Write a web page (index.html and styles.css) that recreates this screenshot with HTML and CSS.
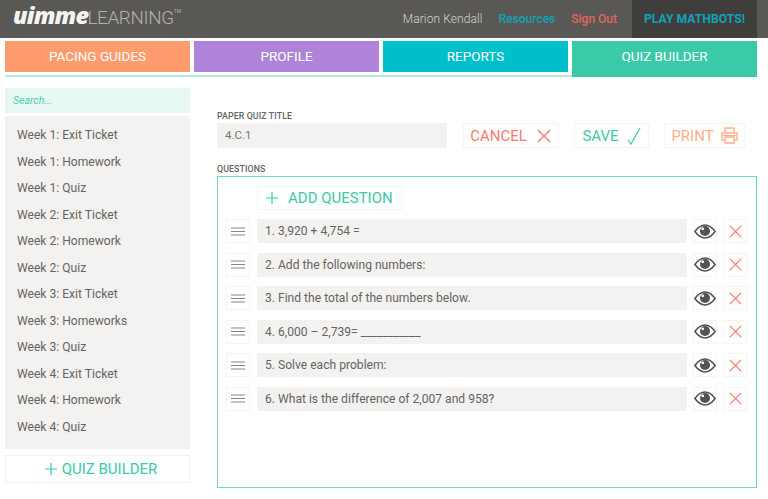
FILE: index.html
```html
<!DOCTYPE html>
<html lang="en">
<head>
<meta charset="utf-8">
<title>Quiz Builder</title>
<link rel="stylesheet" href="styles.css">
</head>
<body>
<svg class="defs" width="0" height="0" aria-hidden="true">
  <symbol id="i-x" viewBox="0 0 16 16"><path d="M2 2 14 14M14 2 2 14" fill="none" stroke="currentColor" stroke-width="1.4"/></symbol>
  <symbol id="i-plus" viewBox="0 0 16 16"><path d="M8 1V15M1 8H15" fill="none" stroke="currentColor" stroke-width="1.4"/></symbol>
  <symbol id="i-eye" viewBox="0 0 24 16"><path d="M1 8C5 2.500 9 1 12 1s7 1.500 11 7c-4 5.500-8 7-11 7S5 13.500 1 8Z" fill="none" stroke="currentColor" stroke-width="1.700"/><circle cx="12" cy="7.500" r="5.500" fill="currentColor"/><circle cx="9.500" cy="5" r="1.500" fill="#fff"/></symbol>
  <symbol id="i-menu" viewBox="0 0 14 9"><path d="M0 1H14M0 4.500H14M0 8H14" fill="none" stroke="currentColor" stroke-width="1"/></symbol>
</svg>
<header class="topbar">
  <div class="logo"><span class="logo-main">uimme</span><span class="logo-sub">LEARNING</span><span class="logo-tm">TM</span></div>
  <nav class="usernav">
    <span class="user">Marion Kendall</span>
    <a class="res">Resources</a>
    <a class="out">Sign Out</a>
    <a class="play">PLAY MATHBOTS!</a>
  </nav>
</header>
<nav class="tabs">
  <a class="tab orange">PACING GUIDES</a>
  <a class="tab purple">PROFILE</a>
  <a class="tab cyan">REPORTS</a>
  <a class="tab green">QUIZ BUILDER</a>
</nav>
<div class="layout">
  <aside class="side">
    <div class="search">Search...</div>
    <ul class="list">
      <li>Week 1: Exit Ticket</li>
      <li>Week 1: Homework</li>
      <li>Week 1: Quiz</li>
      <li>Week 2: Exit Ticket</li>
      <li>Week 2: Homework</li>
      <li>Week 2: Quiz</li>
      <li>Week 3: Exit Ticket</li>
      <li>Week 3: Homeworks</li>
      <li>Week 3: Quiz</li>
      <li>Week 4: Exit Ticket</li>
      <li>Week 4: Homework</li>
      <li>Week 4: Quiz</li>
    </ul>
    <button class="newquiz"><svg class="ic-plus-s"><use href="#i-plus"/></svg>QUIZ BUILDER</button>
  </aside>
  <main class="main">
    <div class="label">PAPER QUIZ TITLE</div>
    <div class="titlerow">
      <div class="titleinput">4.C.1</div>
      <button class="act cancel">CANCEL<svg class="ic-act"><use href="#i-x"/></svg></button>
      <button class="act save">SAVE<svg class="ic-check" viewBox="0 0 14 18"><path d="M1 13 4 17 13 1" fill="none" stroke="currentColor" stroke-width="1.200"/></svg></button>
      <button class="act print">PRINT<svg class="ic-print" viewBox="0 0 17 17"><path d="M4 6V1H13V6M4 13H1V6H16V13H13M4 10H13V16H4Z" fill="none" stroke="currentColor" stroke-width="1.300"/><path d="M2 8.500H15" stroke="currentColor"/></svg></button>
    </div>
    <div class="label qlabel">QUESTIONS</div>
    <section class="qbox">
      <button class="addq"><svg class="ic-plus"><use href="#i-plus"/></svg>ADD QUESTION</button>
      <div class="row"><span class="sq"><svg class="ic-menu"><use href="#i-menu"/></svg></span><div class="q">1. 3,920 + 4,754 =</div><span class="sq eye"><svg class="ic-eye"><use href="#i-eye"/></svg></span><span class="sq del"><svg class="ic-del"><use href="#i-x"/></svg></span></div>
      <div class="row"><span class="sq"><svg class="ic-menu"><use href="#i-menu"/></svg></span><div class="q">2. Add the following numbers:</div><span class="sq eye"><svg class="ic-eye"><use href="#i-eye"/></svg></span><span class="sq del"><svg class="ic-del"><use href="#i-x"/></svg></span></div>
      <div class="row"><span class="sq"><svg class="ic-menu"><use href="#i-menu"/></svg></span><div class="q">3. Find the total of the numbers below.</div><span class="sq eye"><svg class="ic-eye"><use href="#i-eye"/></svg></span><span class="sq del"><svg class="ic-del"><use href="#i-x"/></svg></span></div>
      <div class="row"><span class="sq"><svg class="ic-menu"><use href="#i-menu"/></svg></span><div class="q">4. 6,000 – 2,739= ___________</div><span class="sq eye"><svg class="ic-eye"><use href="#i-eye"/></svg></span><span class="sq del"><svg class="ic-del"><use href="#i-x"/></svg></span></div>
      <div class="row"><span class="sq"><svg class="ic-menu"><use href="#i-menu"/></svg></span><div class="q">5. Solve each problem:</div><span class="sq eye"><svg class="ic-eye"><use href="#i-eye"/></svg></span><span class="sq del"><svg class="ic-del"><use href="#i-x"/></svg></span></div>
      <div class="row"><span class="sq"><svg class="ic-menu"><use href="#i-menu"/></svg></span><div class="q">6. What is the difference of 2,007 and 958?</div><span class="sq eye"><svg class="ic-eye"><use href="#i-eye"/></svg></span><span class="sq del"><svg class="ic-del"><use href="#i-x"/></svg></span></div>
    </section>
  </main>
</div>
</body>
</html>
```

FILE: styles.css
```css
* { box-sizing: border-box; }
html, body { margin: 0; padding: 0; }
body {
  width: 768px;
  height: 499px;
  overflow: hidden;
  background: #fff;
  font-family: Roboto, "Liberation Sans", sans-serif;
  color: #666462;
}
.defs { position: absolute; }
button { font-family: inherit; background: #fff; cursor: pointer; padding: 0; }

.topbar {
  height: 38px;
  background: #5a5855;
  display: flex;
  justify-content: space-between;
  align-items: stretch;
  padding: 0 11px 0 13px;
}
.logo { display: flex; align-items: baseline; line-height: 31px; }
.logo-main {
  font-family: "Open Sans", Roboto, sans-serif;
  font-weight: 800;
  font-style: italic;
  font-size: 23.500px;
  letter-spacing: -0.8px;
  color: #f4f4f2;
}
.logo-sub { font-size: 18.800px; font-weight: 300; color: #b3b1ae; margin-left: -1px; letter-spacing: -0.3px; }
.logo-tm { font-size: 5px; color: #b3b1ae; align-self: flex-start; margin-top: -4px; }
.usernav { display: flex; align-items: center; font-size: 12px; }
.user { color: #d4d3d0; font-weight: 300; letter-spacing: 0.1px; }
.res { color: #0fa3b8; margin-left: 16px; font-weight: 500; }
.out { color: #e0685e; margin-left: 16px; font-weight: 500; }
.play {
  align-self: stretch;
  display: flex;
  align-items: center;
  justify-content: center;
  width: 125px;
  margin-left: 15px;
  background: #403e3c;
  color: #0fa3b8;
  font-weight: 700;
  font-size: 12.200px;
}

.tabs {
  display: flex;
  gap: 4px;
  margin: 3px 11px 0 5px;
  padding-bottom: 2px;
  border-bottom: 2px solid #b3ebdc;
  height: 36px;
}
.tab {
  flex: 1;
  height: 31px;
  display: flex;
  align-items: center;
  justify-content: center;
  color: #fff;
  font-size: 13.500px;
  padding-bottom: 2px;
}
.orange { background: #ff9c6e; }
.purple { background: #af84d8; }
.cyan { background: #00bfcd; }
.green { background: #3bcaa7; height: 36px; padding-bottom: 7px; }

.layout { display: flex; padding: 11px 11px 0 5px; }
.side { width: 185px; flex: none; }
.search {
  height: 25px;
  line-height: 25px;
  background: #e7f8f4;
  color: #4fcfb0;
  font-size: 10.500px;
  font-style: italic;
  padding-left: 8px;
}
.list {
  list-style: none;
  margin: 3px 0 0;
  padding: 6px 0 0 12px;
  height: 333px;
  background: #f3f2f0;
  font-size: 12.100px;
}
.list li { height: 26.500px; line-height: 26.500px; }
.newquiz {
  display: flex;
  align-items: center;
  justify-content: center;
  width: 185px;
  height: 28px;
  margin-top: 6px;
  padding-left: 6px;
  border: 1px solid #f2f2f0;
  color: #3bcaa7;
  font-size: 15px;
}
.ic-plus-s { width: 14px; height: 14px; margin-right: 4px; color: #3bcaa7; }

.main { flex: 1; margin-left: 27px; }
.label { font-size: 8.800px; font-weight: 500; color: #666462; line-height: 10px; margin-top: 23px; letter-spacing: 0.1px; }
.titlerow { display: flex; margin-top: 2px; height: 25px; }
.titleinput {
  width: 230px;
  background: #f3f2f0;
  font-size: 11.500px;
  line-height: 25px;
  padding-left: 8px;
  color: #777573;
}
.act {
  height: 25px;
  border: 1px solid #f4f4f2;
  display: flex;
  align-items: center;
  justify-content: center;
  font-size: 15px;
}
.cancel { width: 96px; margin-left: 16px; color: #fa7a70; }
.save { width: 75px; margin-left: 15px; color: #3bcaa7; }
.print { width: 81px; margin-left: 15px; color: #ffae87; }
.ic-act { width: 16px; height: 16px; margin-left: 9px; }
.ic-check { width: 14px; height: 18px; margin-left: 8px; }
.ic-print { width: 17px; height: 17px; margin-left: 7px; }
.qlabel { margin-top: 16px; }
.qbox {
  margin-top: 2px;
  height: 312px;
  border: 1px solid #6fdcc0;
  padding: 9px 9px 0 8px;
}
.addq {
  display: flex;
  align-items: center;
  height: 24px;
  width: 145px;
  margin: 0 0 9px 31px;
  padding-left: 7px;
  border: 1px solid #f4f4f2;
  color: #3bcaa7;
  font-size: 15px;
}
.ic-plus { width: 14px; height: 14px; margin-right: 9px; }
.row { display: flex; align-items: stretch; height: 24px; margin-bottom: 9.500px; }
.sq {
  width: 24px;
  flex: none;
  border: 1px solid #f4f4f2;
  display: flex;
  align-items: center;
  justify-content: center;
}
.q {
  flex: 1;
  margin: 0 6px 0 7px;
  background: #f3f2f0;
  font-size: 12.100px;
  line-height: 25px;
  padding-left: 8px;
}
.eye { margin-right: 6px; color: #555351; }
.del { color: #fa7a70; }
.ic-menu { width: 14px; height: 9px; color: #888684; }
.ic-eye { width: 22px; height: 15px; }
.ic-del { width: 15px; height: 15px; }
```
